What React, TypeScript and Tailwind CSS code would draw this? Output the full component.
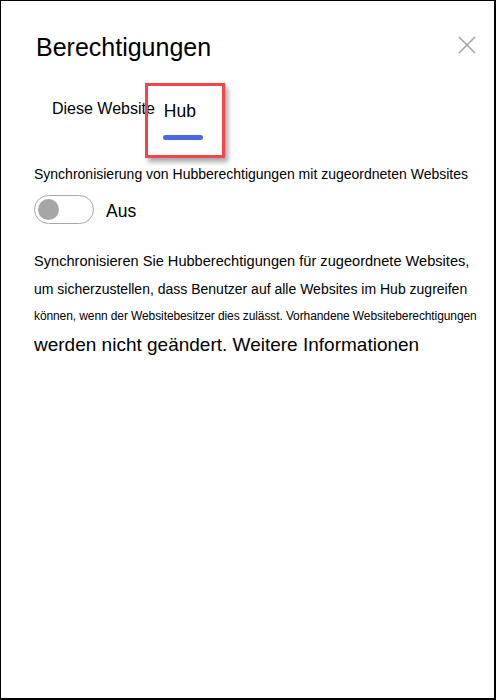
import React from "react";

export default function App() {
  return (
    <div
      className="relative w-[496px] h-[700px] bg-white border-l border-t border-r-2 border-b-2 border-black overflow-hidden text-black"
      style={{ fontFamily: '"Liberation Sans", Arial, sans-serif' }}
    >
      <div className="flex items-start justify-between pl-[35px] pr-[18px] pt-[31px]">
        <h1 className="text-[25px] leading-[30px]">Berechtigungen</h1>
        <button className="mt-[4px] w-[18px] h-[18px] text-[#a3a3a3]" aria-label="Schließen">
          <svg viewBox="0 0 18 18" width="18" height="18" fill="none" stroke="currentColor" strokeWidth="1.6">
            <path d="M1 1 L17 17 M17 1 L1 17" />
          </svg>
        </button>
      </div>

      <div className="flex items-start pl-[51px] pt-[36px] h-[76px]">
        <div className="text-[16px] leading-[20px] pt-[1px]">Diese Website</div>
        <div className="flex flex-col items-start ml-[8px] pt-[3px]">
          <div className="text-[17.5px] leading-[20px] pl-[1px]">Hub</div>
          <div className="mt-[14px] w-[40px] h-[5px] rounded-full bg-[#4b6ad8]" />
        </div>
      </div>

      <div className="absolute left-[144px] top-[82px] w-[80px] h-[75px] border-[3px] border-[#f2454b] shadow-[3px_4px_5px_rgba(0,0,0,0.35)]" />

      <div className="pl-[33px]">
        <div className="text-[14px] leading-[18px] mt-[27px]">
          Synchronisierung von Hubberechtigungen mit zugeordneten Websites
        </div>
        <div className="flex items-center mt-[12px] h-[29px]">
          <div className="w-[60px] h-[29px] rounded-full border border-[#a8a8a8] flex items-center pl-[3px]">
            <div className="w-[21px] h-[21px] rounded-full bg-[#a6a6a6]" />
          </div>
          <div className="ml-[12px] text-[17.5px] leading-[20px] pt-[3px]">Aus</div>
        </div>
        <div className="mt-[28px] text-[14.6px] leading-[18px]">
          Synchronisieren Sie Hubberechtigungen für zugeordnete Websites,
        </div>
        <div className="mt-[10px] text-[14px] leading-[18px]">
          um sicherzustellen, dass Benutzer auf alle Websites im Hub zugreifen
        </div>
        <div className="mt-[9px] text-[12px] leading-[18px] tracking-[-0.1px]">
          können, wenn der Websitebesitzer dies zulässt. Vorhandene Websiteberechtigungen
        </div>
        <div className="mt-[9px] text-[19px] leading-[22px]">
          werden nicht geändert. Weitere Informationen
        </div>
      </div>
    </div>
  );
}
